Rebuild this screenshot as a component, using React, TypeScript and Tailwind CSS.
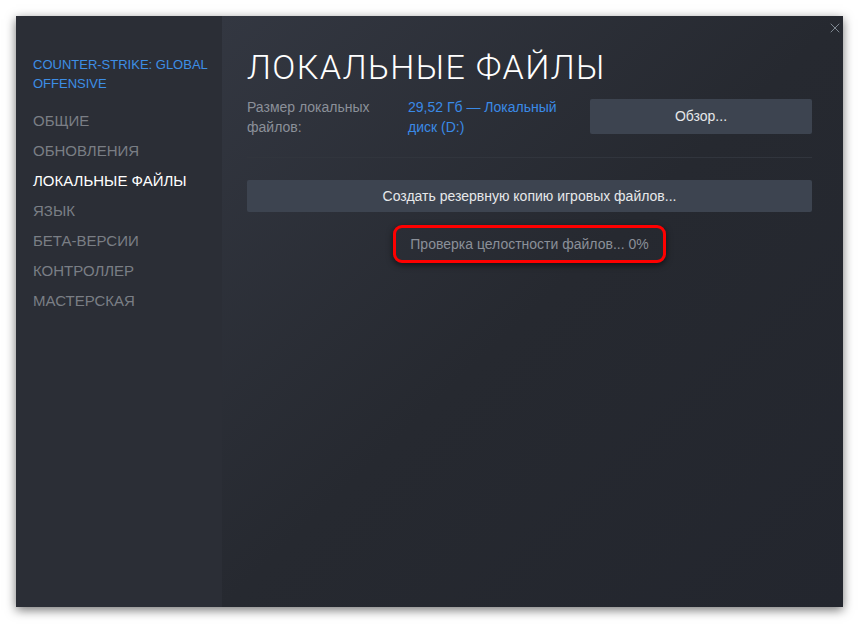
import { X } from 'lucide-react';

const menu = [
  { label: 'Общие', active: false },
  { label: 'Обновления', active: false },
  { label: 'Локальные файлы', active: true },
  { label: 'Язык', active: false },
  { label: 'Бета-версии', active: false },
  { label: 'Контроллер', active: false },
  { label: 'Мастерская', active: false },
];

export default function App() {
  return (
    <div className="w-[860px] h-[624px] bg-white overflow-hidden" style={{ fontFamily: '"Liberation Sans", Arial, sans-serif' }}>
      <div className="relative ml-4 mt-4 w-[827px] h-[591px] flex shadow-[0_3px_10px_rgba(0,0,0,0.55)]">
        {/* sidebar */}
        <div className="w-[206px] shrink-0 bg-[#2b2e36] pl-[17px] pt-[39px]">
          <div className="text-[13px] leading-[19px] uppercase text-[#3d8ee6] pr-2">
            Counter-Strike: Global Offensive
          </div>
          <ul className="mt-[13px]">
            {menu.map((m) => (
              <li
                key={m.label}
                className={`uppercase text-[15px] leading-[30px] ${m.active ? 'text-white' : 'text-[#7a7e85]'}`}
              >
                {m.label}
              </li>
            ))}
          </ul>
        </div>

        {/* content */}
        <div className="flex-1 bg-gradient-to-br from-[#333741] via-[#262930] to-[#23262e] pl-[25px] pr-[31px] pt-[30px]">
          <h1 className="text-[34px] leading-[42px] uppercase text-white font-light tracking-[1.4px]" style={{ fontFamily: 'Roboto, "Liberation Sans", sans-serif' }}>
            Локальные файлы
          </h1>
          <div className="flex items-start mt-[9px]">
            <div className="w-[161px] text-[14px] leading-[20px] text-[#8b9099]">
              Размер локальных
              <br />
              файлов:
            </div>
            <div className="w-[170px] text-[14px] leading-[20px] text-[#3a8ae6]">
              29,52 Гб — Локальный
              <br />
              диск (D:)
            </div>
            <button className="ml-auto mt-[2px] w-[222px] h-[35px] rounded-[2px] bg-[#3d4450] text-[14px] text-[#e6e8ea]">
              Обзор...
            </button>
          </div>
          <div className="mt-[20px] h-px bg-[#31353d]" />
          <button className="mt-[22px] w-full h-[32px] rounded-[2px] bg-[#3d4450] text-[14px] text-[#e6e8ea]">
            Создать резервную копию игровых файлов...
          </button>
          <div className="flex justify-center mt-[13px]">
            <div className="w-[273px] h-[38px] rounded-[9px] border-[3px] border-[#ff0000] flex items-center justify-center text-[14px] text-[#8b9099] shadow-[0_2px_6px_rgba(0,0,0,0.6)]">
              Проверка целостности файлов... 0%
            </div>
          </div>
        </div>

        <button className="absolute top-[4px] right-[0px] text-[#7f8891]" aria-label="Закрыть">
          <X size={16} strokeWidth={1.5} />
        </button>
      </div>
    </div>
  );
}
